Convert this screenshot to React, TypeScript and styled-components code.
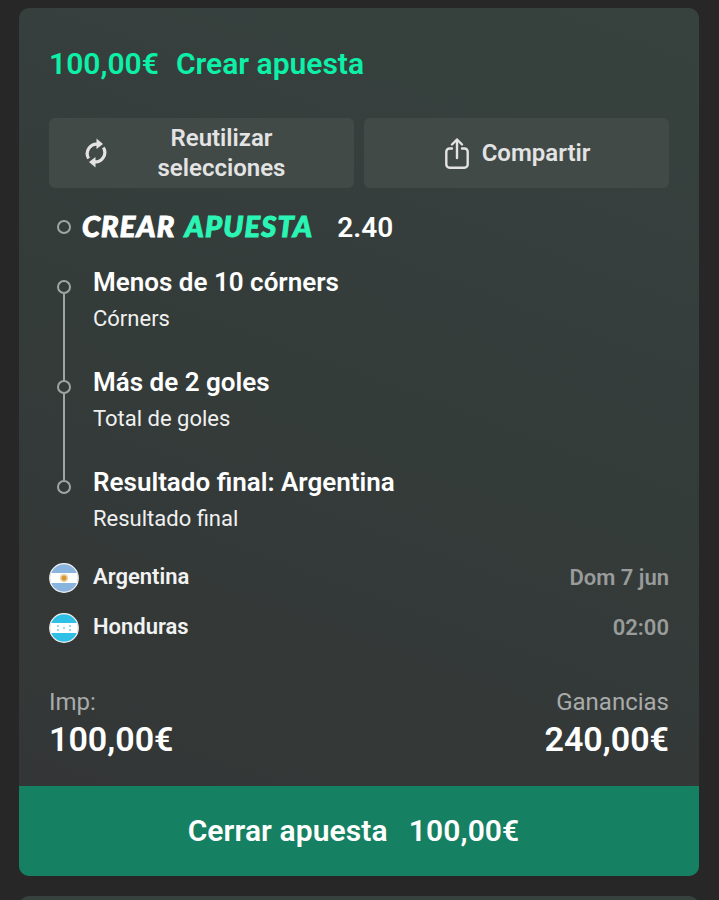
import React from "react";
import styled, { createGlobalStyle } from "styled-components";

const GlobalStyle = createGlobalStyle`
  html, body { margin: 0; padding: 0; background: #272727; height: 100%; overflow: hidden; }
  * { box-sizing: border-box; }
  body { font-family: Roboto, "Liberation Sans", sans-serif; }
`;

const selections = [
  { title: "Menos de 10 córners", market: "Córners" },
  { title: "Más de 2 goles", market: "Total de goles" },
  { title: "Resultado final: Argentina", market: "Resultado final" },
];

const ArgentinaFlag = () => (
  <svg width="30" height="30" viewBox="0 0 30 30">
    <clipPath id="ar"><circle cx="15" cy="15" r="14" /></clipPath>
    <g clipPath="url(#ar)">
      <rect width="30" height="30" fill="#fff" />
      <rect width="30" height="10" fill="#8ab4e0" />
      <rect y="20" width="30" height="10" fill="#8ab4e0" />
      <circle cx="15" cy="15" r="4.2" fill="#d9a441" opacity="0.45" />
      <circle cx="15" cy="15" r="2.6" fill="#d4983a" />
    </g>
    <circle cx="15" cy="15" r="14.3" fill="none" stroke="#f2f2f2" strokeWidth="1.2" />
  </svg>
);

const HondurasFlag = () => (
  <svg width="30" height="30" viewBox="0 0 30 30">
    <clipPath id="hn"><circle cx="15" cy="15" r="14" /></clipPath>
    <g clipPath="url(#hn)">
      <rect width="30" height="30" fill="#fff" />
      <rect width="30" height="10" fill="#2fc0e6" />
      <rect y="20" width="30" height="10" fill="#2fc0e6" />
      <g fill="#6fd0ea">
        <circle cx="15" cy="15" r="1" />
        <circle cx="9" cy="13" r="1" />
        <circle cx="9" cy="17" r="1" />
        <circle cx="21" cy="13" r="1" />
        <circle cx="21" cy="17" r="1" />
      </g>
    </g>
    <circle cx="15" cy="15" r="14.3" fill="none" stroke="#f2f2f2" strokeWidth="1.2" />
  </svg>
);

const ReuseIcon = () => (
  <svg width="24" height="30" viewBox="0 0 24 30" fill="none">
    <path d="M14.5 6.3 A 9.5 9.5 0 0 0 4.6 20.5" stroke="#e3e3e3" strokeWidth="3.2" />
    <path d="M12.5 0.5 L19 6 L12.5 11 Z" fill="#e3e3e3" />
    <path d="M9.5 23.7 A 9.5 9.5 0 0 0 19.4 9.5" stroke="#e3e3e3" strokeWidth="3.2" />
    <path d="M11.5 19 L5 24 L11.5 29.5 Z" fill="#e3e3e3" />
  </svg>
);

const ShareIcon = () => (
  <svg width="24" height="31" viewBox="0 0 24 31" fill="none" stroke="#e3e3e3" strokeWidth="2.4" strokeLinecap="round" strokeLinejoin="round">
    <path d="M7 10.5 H4.5 A3.2 3.2 0 0 0 1.3 13.7 V26.5 A3.2 3.2 0 0 0 4.5 29.7 H19.5 A3.2 3.2 0 0 0 22.7 26.5 V13.7 A3.2 3.2 0 0 0 19.5 10.5 H17" />
    <path d="M12 20 V2" />
    <path d="M7 6.5 L12 1.5 L17 6.5" />
  </svg>
);

export default function App() {
  return (
    <Page>
      <GlobalStyle />
      <Card>
        <Body>
          <Header>
            <span>100,00€</span>
            <span>Crear apuesta</span>
          </Header>
          <Actions>
            <ActionButton>
              <ActionIcon $left={35}><ReuseIcon /></ActionIcon>
              <ReuseLabel>Reutilizar selecciones</ReuseLabel>
            </ActionButton>
            <ActionButton $nudge={2}>
              <ShareIcon />
              <span>Compartir</span>
            </ActionButton>
          </Actions>
          <BrandRow>
            <Dot />
            <Brand>CREAR <em>APUESTA</em></Brand>
            <Odds>2.40</Odds>
          </BrandRow>
          <Timeline>
            {selections.map((s, i) => (
              <Selection key={s.title} $last={i === selections.length - 1}>
                <Dot />
                <div>
                  <SelectionTitle>{s.title}</SelectionTitle>
                  <Market>{s.market}</Market>
                </div>
              </Selection>
            ))}
          </Timeline>
          <Teams>
            <TeamRow>
              <ArgentinaFlag />
              <TeamName>Argentina</TeamName>
              <MatchInfo>Dom 7 jun</MatchInfo>
            </TeamRow>
            <TeamRow>
              <HondurasFlag />
              <TeamName>Honduras</TeamName>
              <MatchInfo>02:00</MatchInfo>
            </TeamRow>
          </Teams>
          <Totals>
            <TotalColumn>
              <TotalLabel>Imp:</TotalLabel>
              <TotalValue>100,00€</TotalValue>
            </TotalColumn>
            <TotalColumn $right>
              <TotalLabel>Ganancias</TotalLabel>
              <TotalValue>240,00€</TotalValue>
            </TotalColumn>
          </Totals>
        </Body>
        <CloseButton>
          <span>Cerrar apuesta</span>
          <span>100,00€</span>
        </CloseButton>
      </Card>
      <NextCard />
    </Page>
  );
}

const Page = styled.div`
  height: 900px;
  overflow: hidden;
  padding: 8px 20px 0 19px;
`;
const Card = styled.div`
  width: 680px;
  height: 868px;
  border-radius: 10px;
  overflow: hidden;
  display: flex;
  flex-direction: column;
  background: linear-gradient(200deg, #37423f 0%, #343c3a 45%, #333535 100%);
`;
const Body = styled.div`
  flex: 1;
  padding: 0 30px;
`;
const Header = styled.div`
  height: 110px;
  padding-top: 37px;
  display: flex;
  gap: 17px;
  color: #0cf0a8;
  font-size: 30px;
  line-height: 38px;
  font-weight: 600;
`;
const Actions = styled.div`
  display: flex;
  gap: 10px;
`;
const ActionButton = styled.div<{ $nudge?: number }>`
  position: relative;
  flex: 0 0 305px;
  height: 70px;
  padding-left: ${(p) => p.$nudge ?? 0}px;
  border-radius: 6px;
  background: #414a47;
  color: #e3e3e3;
  font-size: 24px;
  line-height: 30px;
  font-weight: 600;
  display: flex;
  align-items: center;
  justify-content: center;
  gap: 13px;
  text-align: center;
`;
const ActionIcon = styled.span<{ $left: number }>`
  position: absolute;
  left: ${(p) => p.$left}px;
  top: 20px;
  display: flex;
`;
const ReuseLabel = styled.span`
  width: 170px;
  margin-left: 40px;
`;
const BrandRow = styled.div`
  height: 40px;
  margin-top: 19px;
  padding-left: 8px;
  display: flex;
  align-items: center;
`;
const Dot = styled.span`
  flex: none;
  width: 14px;
  height: 14px;
  border-radius: 50%;
  border: 2px solid #a0a5a3;
  background: transparent;
`;
const Brand = styled.span`
  margin-left: 11px;
  font-family: Lato, Roboto, sans-serif;
  font-style: italic;
  font-weight: 900;
  font-size: 29px;
  letter-spacing: 1.15px;
  -webkit-text-stroke: 1px currentColor;
  color: #fff;
  line-height: 36px;
  margin-top: -2px;
  em { color: #2af5b5; font-style: italic; margin-left: 2px; }
`;
const Odds = styled.span`
  margin-left: 24px;
  font-size: 28px;
  font-weight: 600;
  color: #fff;
`;
const Timeline = styled.div`
  margin-top: 20px;
`;
const Selection = styled.div<{ $last?: boolean }>`
  position: relative;
  height: 100px;
  padding-left: 8px;
  display: flex;
  gap: 22px;
  & > span { margin-top: 13px; }
  &::before {
    content: "";
    display: ${(p) => (p.$last ? "none" : "block")};
    position: absolute;
    left: 14px;
    top: 27px;
    bottom: -13px;
    width: 2px;
    background: #a0a5a3;
  }
`;
const SelectionTitle = styled.div`
  color: #fff;
  font-size: 26px;
  line-height: 36px;
  font-weight: 600;
  margin-top: -3px;
  margin-bottom: 1px;
`;
const Market = styled.div`
  color: #f0f0f0;
  font-size: 22px;
  line-height: 36px;
`;
const Teams = styled.div`
  margin-top: -4px;
  display: flex;
  flex-direction: column;
  gap: 20px;
`;
const TeamRow = styled.div`
  height: 30px;
  display: flex;
  align-items: center;
  gap: 14px;
`;
const TeamName = styled.span`
  flex: 1;
  color: #f2f2f2;
  font-size: 22px;
  font-weight: 600;
  padding-bottom: 3px;
`;
const MatchInfo = styled.span`
  color: #999c9b;
  font-size: 22px;
  font-weight: 600;
  padding-bottom: 1px;
`;
const Totals = styled.div`
  margin-top: 44px;
  display: flex;
  justify-content: space-between;
`;
const TotalColumn = styled.div<{ $right?: boolean }>`
  display: flex;
  flex-direction: column;
  align-items: ${(p) => (p.$right ? "flex-end" : "flex-start")};
`;
const TotalLabel = styled.span`
  color: #a8abaa;
  font-size: 24px;
  line-height: 30px;
`;
const TotalValue = styled.span`
  color: #fff;
  font-size: 34px;
  line-height: 46px;
  font-weight: 600;
  margin-top: -1px;
`;
const CloseButton = styled.div`
  height: 90px;
  flex: none;
  padding: 0 11px 2px 0;
  background: #168162;
  color: #fff;
  display: flex;
  align-items: center;
  justify-content: center;
  gap: 21px;
  font-size: 30px;
  font-weight: 600;
  letter-spacing: 0.1px;
`;
const NextCard = styled.div`
  width: 680px;
  height: 40px;
  margin-top: 20px;
  border-radius: 10px;
  background: #37423f;
`;
